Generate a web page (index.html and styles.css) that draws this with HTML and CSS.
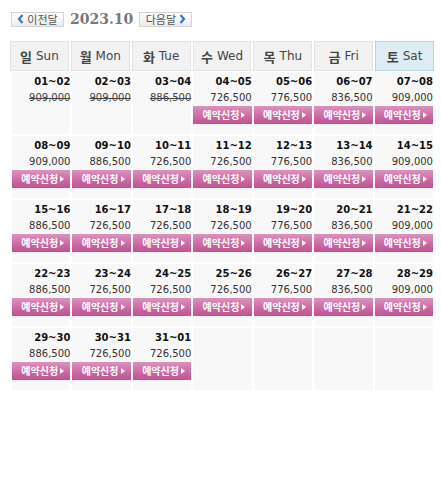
FILE: index.html
```
<!DOCTYPE html>
<html lang="ko">
<head>
<meta charset="utf-8">
<link rel="stylesheet" href="styles.css">
</head>
<body>
<div class="cal">
  <div class="nav">
    <a class="navbtn"><svg class="chev" width="7" height="10" viewBox="0 0 7 10"><path d="M5.5 1 L2 5 L5.5 9" fill="none" stroke="#3a78c6" stroke-width="2.2"/></svg>이전달</a>
    <span class="title">2023.10</span>
    <a class="navbtn">다음달<svg class="chev" width="7" height="10" viewBox="0 0 7 10"><path d="M1.5 1 L5 5 L1.5 9" fill="none" stroke="#3a78c6" stroke-width="2.2"/></svg></a>
  </div>
  <div class="head">
    <div class="hd"><span class="ko">일</span> Sun</div>
    <div class="hd"><span class="ko">월</span> Mon</div>
    <div class="hd"><span class="ko">화</span> Tue</div>
    <div class="hd"><span class="ko">수</span> Wed</div>
    <div class="hd"><span class="ko">목</span> Thu</div>
    <div class="hd"><span class="ko">금</span> Fri</div>
    <div class="hd sat"><span class="ko">토</span> Sat</div>
  </div>
  <div class="grid">
    <div class="cell"><div class="date">01~02</div><div class="price old">909,000</div></div>
    <div class="cell"><div class="date">02~03</div><div class="price old">909,000</div></div>
    <div class="cell"><div class="date">03~04</div><div class="price old">886,500</div></div>
    <div class="cell"><div class="date">04~05</div><div class="price">726,500</div><a class="btn">예약신청</a></div>
    <div class="cell"><div class="date">05~06</div><div class="price">776,500</div><a class="btn">예약신청</a></div>
    <div class="cell"><div class="date">06~07</div><div class="price">836,500</div><a class="btn">예약신청</a></div>
    <div class="cell"><div class="date">07~08</div><div class="price">909,000</div><a class="btn">예약신청</a></div>

    <div class="cell"><div class="date">08~09</div><div class="price">909,000</div><a class="btn">예약신청</a></div>
    <div class="cell"><div class="date">09~10</div><div class="price">886,500</div><a class="btn">예약신청</a></div>
    <div class="cell"><div class="date">10~11</div><div class="price">726,500</div><a class="btn">예약신청</a></div>
    <div class="cell"><div class="date">11~12</div><div class="price">726,500</div><a class="btn">예약신청</a></div>
    <div class="cell"><div class="date">12~13</div><div class="price">776,500</div><a class="btn">예약신청</a></div>
    <div class="cell"><div class="date">13~14</div><div class="price">836,500</div><a class="btn">예약신청</a></div>
    <div class="cell"><div class="date">14~15</div><div class="price">909,000</div><a class="btn">예약신청</a></div>

    <div class="cell"><div class="date">15~16</div><div class="price">886,500</div><a class="btn">예약신청</a></div>
    <div class="cell"><div class="date">16~17</div><div class="price">726,500</div><a class="btn">예약신청</a></div>
    <div class="cell"><div class="date">17~18</div><div class="price">726,500</div><a class="btn">예약신청</a></div>
    <div class="cell"><div class="date">18~19</div><div class="price">726,500</div><a class="btn">예약신청</a></div>
    <div class="cell"><div class="date">19~20</div><div class="price">776,500</div><a class="btn">예약신청</a></div>
    <div class="cell"><div class="date">20~21</div><div class="price">836,500</div><a class="btn">예약신청</a></div>
    <div class="cell"><div class="date">21~22</div><div class="price">909,000</div><a class="btn">예약신청</a></div>

    <div class="cell"><div class="date">22~23</div><div class="price">886,500</div><a class="btn">예약신청</a></div>
    <div class="cell"><div class="date">23~24</div><div class="price">726,500</div><a class="btn">예약신청</a></div>
    <div class="cell"><div class="date">24~25</div><div class="price">726,500</div><a class="btn">예약신청</a></div>
    <div class="cell"><div class="date">25~26</div><div class="price">726,500</div><a class="btn">예약신청</a></div>
    <div class="cell"><div class="date">26~27</div><div class="price">776,500</div><a class="btn">예약신청</a></div>
    <div class="cell"><div class="date">27~28</div><div class="price">836,500</div><a class="btn">예약신청</a></div>
    <div class="cell"><div class="date">28~29</div><div class="price">909,000</div><a class="btn">예약신청</a></div>

    <div class="cell"><div class="date">29~30</div><div class="price">886,500</div><a class="btn">예약신청</a></div>
    <div class="cell"><div class="date">30~31</div><div class="price">726,500</div><a class="btn">예약신청</a></div>
    <div class="cell"><div class="date">31~01</div><div class="price">726,500</div><a class="btn">예약신청</a></div>
    <div class="cell"></div>
    <div class="cell"></div>
    <div class="cell"></div>
    <div class="cell"></div>
  </div>
</div>
</body>
</html>
```
FILE: styles.css
```
body {
  margin: 0;
  background: #fff;
  font-family: "DejaVu Sans", "Noto Sans CJK KR", sans-serif;
}
.cal {
  width: 424px;
  margin-left: 10px;
  padding-top: 11px;
}
.nav {
  display: flex;
  align-items: center;
  gap: 6px;
  height: 16px;
  padding-left: 1px;
}
.navbtn {
  display: flex;
  align-items: center;
  justify-content: center;
  gap: 3px;
  width: 53px;
  height: 15px;
  box-sizing: border-box;
  border: 1px solid #d4d4d4;
  background: linear-gradient(#ffffff, #ececec);
  font-family: "Noto Sans CJK KR", sans-serif;
  font-size: 11px;
  line-height: 12px;
  color: #555;
}
.chev { display: block; }
.title {
  font-family: "DejaVu Serif", serif;
  font-weight: bold;
  font-size: 14px;
  line-height: 16px;
  color: #787878;
}
.head {
  display: grid;
  grid-template-columns: repeat(7, 1fr);
  gap: 2px;
  margin-top: 14px;
}
.hd {
  height: 30px;
  box-sizing: border-box;
  border: 1px solid #e3e3e3;
  background: #f2f2f2;
  display: flex;
  align-items: center;
  justify-content: center;
  gap: 4px;
  font-size: 12px;
  color: #444;
}
.hd .ko {
  font-family: "Noto Sans CJK KR", sans-serif;
  font-weight: bold;
  font-size: 13px;
}
.hd.sat {
  background: #ddedf3;
  border-color: #b7d7e5;
}
.grid {
  display: grid;
  grid-template-columns: repeat(7, 1fr);
  gap: 2px;
  margin: 1px 1px 0 2px;
}
.cell {
  height: 62px;
  box-sizing: border-box;
  padding-top: 2px;
  background: #f8f8f8;
  display: flex;
  flex-direction: column;
}
.date {
  font-weight: bold;
  font-size: 10px;
  line-height: 16px;
  text-align: right;
  color: #111;
}
.price {
  font-size: 10px;
  line-height: 16px;
  text-align: right;
  color: #333;
}
.price.old {
  text-decoration: line-through;
  color: #444;
}
.btn {
  height: 18px;
  background: linear-gradient(#dc92be, #cd6aa4 55%, #c0528f);
  color: #fff;
  display: flex;
  align-items: center;
  justify-content: center;
  gap: 2px;
  padding-left: 3px;
  font-family: "Noto Sans CJK KR", sans-serif;
  font-weight: bold;
  font-size: 10px;
  line-height: 12px;
}
.btn::after {
  content: "";
  border-left: 4px solid #fff;
  border-top: 3.5px solid transparent;
  border-bottom: 3.5px solid transparent;
}
```
